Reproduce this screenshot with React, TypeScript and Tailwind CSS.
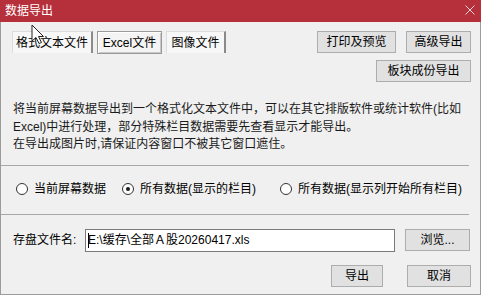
const font = "font-['Liberation_Sans','Noto_Sans_CJK_SC',sans-serif]"

const Btn = ({ label, w }: { label: string; w: string }) => (
  <div className={`${w} h-[22px] flex items-center justify-center bg-[#e1e1e1] border border-[#adadad] text-[12px] text-black`}>
    {label}
  </div>
)

const Radio = ({ label, checked, ml }: { label: string; checked?: boolean; ml: string }) => (
  <div className={`${ml} flex items-center gap-[6px]`}>
    <div className="w-[12px] h-[12px] rounded-full border border-[#333] bg-white flex items-center justify-center">
      {checked && <div className="w-[4px] h-[4px] rounded-full bg-[#1a1a1a]" />}
    </div>
    <span className="text-[12px] text-black whitespace-nowrap">{label}</span>
  </div>
)

export default function App() {
  return (
    <div className={`w-[481px] h-[295px] bg-[#f0f0f0] relative overflow-hidden ${font}`}>
      {/* title bar */}
      <div className="h-[22px] bg-[#b5303a] flex items-center justify-between pl-[5px] pr-[6px]">
        <span className="text-white text-[12px]">数据导出</span>
        <svg width="10" height="10" viewBox="0 0 10 10" className="mt-[-2px]">
          <path d="M0.5 0.5 L9.5 9.5 M9.5 0.5 L0.5 9.5" stroke="#f3d6d8" strokeWidth="1" />
        </svg>
      </div>

      <div className="h-[273px] border-l border-r border-b border-[#9c9c9c] flex flex-col">
        {/* tabs + top buttons */}
        <div className="flex justify-between items-start pt-[9px] pl-[11px] pr-[9px]">
          <div className="flex gap-[4px]">
            <div className="w-[81px] h-[22px] flex items-center justify-center bg-[#f7f7f7] border-t border-l border-[#dcdcdc] border-r-2 border-r-[#8a8a8a] text-[12px] text-black">
              格式文本文件
            </div>
            <div className="w-[65px] h-[23px] flex items-center justify-center bg-[#f4f4f4] border border-[#9a9a9a] shadow-[inset_1px_1px_0_#ffffff,inset_-1px_-1px_0_#c8c8c8] text-[12px] text-black">
              Excel文件
            </div>
            <div className="w-[60px] h-[22px] flex items-center justify-center bg-[#f7f7f7] border-t border-l border-[#dcdcdc] border-r-2 border-r-[#8a8a8a] text-[12px] text-black">
              图像文件
            </div>
          </div>
          <div className="flex flex-col items-end gap-[7px]">
            <div className="flex gap-[10px]">
              <Btn label="打印及预览" w="w-[79px]" />
              <Btn label="高级导出" w="w-[65px]" />
            </div>
            <Btn label="板块成份导出" w="w-[95px]" />
          </div>
        </div>

        {/* description */}
        <div className="mt-[19px] pl-[12px] text-[12px] leading-[17.5px] text-[#1a1a1a] whitespace-nowrap">
          <p>将当前屏幕数据导出到一个格式化文本文件中，可以在其它排版软件或统计软件(比如</p>
          <p>Excel)中进行处理，部分特殊栏目数据需要先查看显示才能导出。</p>
          <p>在导出成图片时,请保证内容窗口不被其它窗口遮住。</p>
        </div>

        <div className="mt-[11px] mr-[11px] h-px bg-[#a8a8a8]" />

        {/* radios */}
        <div className="mt-[14px] h-[18px] flex items-center">
          <Radio label="当前屏幕数据" ml="ml-[15px]" />
          <Radio label="所有数据(显示的栏目)" checked ml="ml-[16px]" />
          <Radio label="所有数据(显示列开始所有栏目)" ml="ml-[24px]" />
        </div>

        <div className="mt-[16px] mr-[11px] h-px bg-[#a8a8a8]" />

        {/* file name */}
        <div className="mt-[14px] flex items-center pl-[12px]">
          <span className="w-[72px] text-[12px] text-black">存盘文件名:</span>
          <div className="w-[310px] h-[23px] bg-white border border-[#7a7a7a] flex items-center pl-[2px] text-[12px] text-black whitespace-nowrap">
            <span className="w-px h-[15px] bg-black mr-[-1px]" />
            E:\缓存\全部Ａ股20260417.xls
          </div>
          <div className="ml-[10px]">
            <Btn label="浏览..." w="w-[65px]" />
          </div>
        </div>

        {/* actions */}
        <div className="mt-[13px] flex justify-end gap-[24px] pr-[9px]">
          <Btn label="导出" w="w-[52px]" />
          <Btn label="取消" w="w-[64px]" />
        </div>
      </div>

      {/* mouse pointer */}
      <svg width="14" height="21" viewBox="0 0 14 21" className="absolute left-[31px] top-[24px]">
        <path d="M1 1 L1 17 L5 13.5 L8 19.5 L10.5 18.5 L7.5 12.5 L12.5 12.5 Z" fill="#ffffff" stroke="#222" strokeWidth="1" strokeLinejoin="round" />
      </svg>
    </div>
  )
}
